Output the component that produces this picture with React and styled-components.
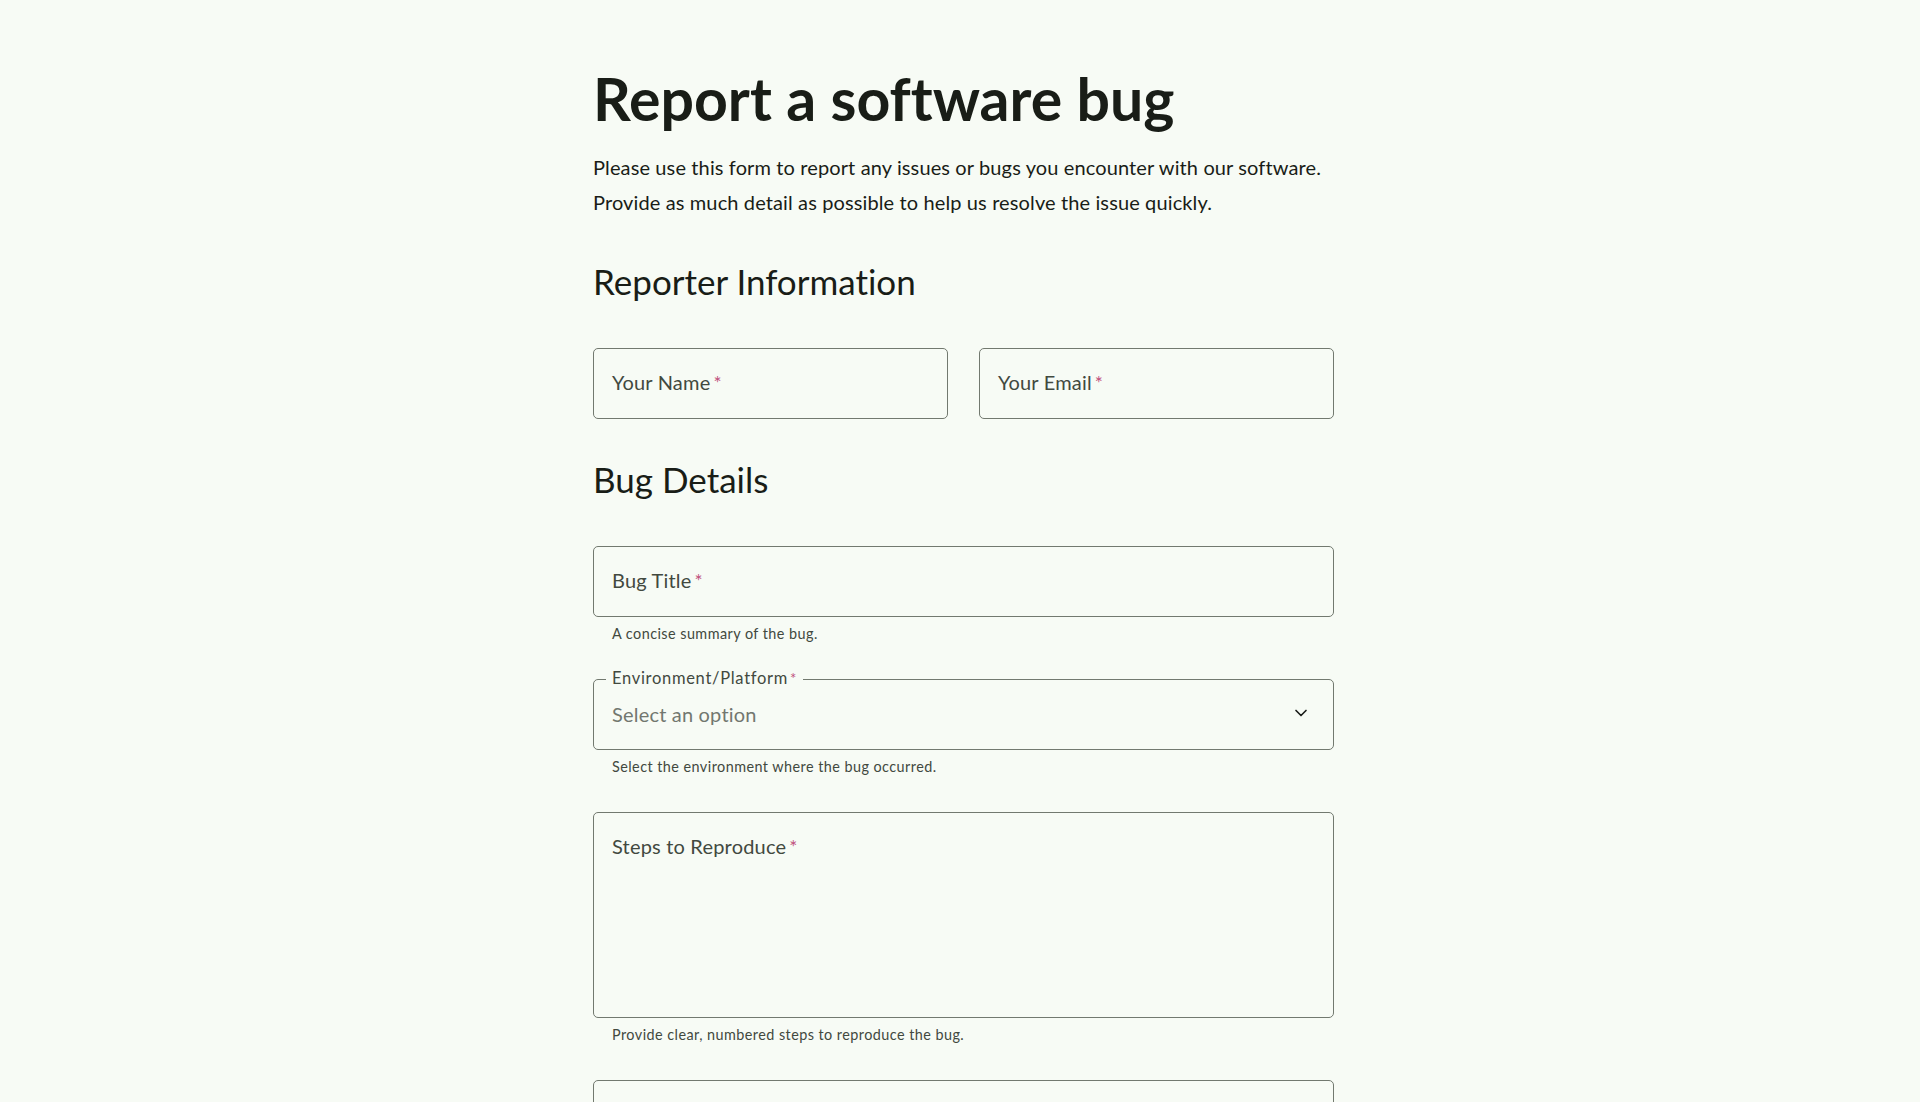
import React from "react";
import styled, { createGlobalStyle } from "styled-components";
import { ChevronDown } from "lucide-react";

const Global = createGlobalStyle`
  html, body { margin: 0; padding: 0; background: #f7fbf5; }
  body {
    font-family: Lato, "Noto Sans", sans-serif;
    color: #191c18;
    font-variant-ligatures: none;
    font-feature-settings: "liga" 0;
  }
  * { box-sizing: border-box; }
`;

const Page = styled.div`
  display: flex;
  justify-content: center;
  padding: 64px 0 80px 7px;
`;

const Main = styled.main`
  width: 741px;
  display: flex;
  flex-direction: column;
`;

const Title = styled.h1`
  margin: 0;
  font-size: 59px;
  line-height: 1.2;
  font-weight: 700;
  color: #191d17;
`;

const Intro = styled.p`
  margin: 15px 0 0;
  font-size: 20px;
  line-height: 35px;
  letter-spacing: 0.12px;
  color: #191d17;
`;

const SectionTitle = styled.h2`
  margin: ${(p) => p.$top}px 0 46px;
  font-size: 35px;
  line-height: 1.2;
  font-weight: 400;
  color: #191d17;
`;

const Row = styled.div`
  display: grid;
  grid-template-columns: 1fr 1fr;
  gap: 31px;
`;

const Field = styled.div`
  display: flex;
  flex-direction: column;
  margin-bottom: ${(p) => p.$gap ?? 35}px;
`;

const Box = styled.div`
  position: relative;
  height: ${(p) => p.$h || 71}px;
  border: 1px solid #72796f;
  border-radius: 5px;
  display: flex;
  align-items: ${(p) => (p.$multi ? "flex-start" : "center")};
  justify-content: space-between;
  padding: ${(p) => (p.$multi ? "21px 18px 0 18px" : "0 22px 2px 18px")};
`;

const Label = styled.span`
  font-size: 20px;
  line-height: 24px;
  letter-spacing: 0.19px;
  color: #42493f;
`;

const Req = styled.span`
  color: #c0507c;
  font-size: 19px;
  margin-left: 3px;
`;

const Placeholder = styled.span`
  font-size: 20px;
  line-height: 24px;
  letter-spacing: 0.19px;
  color: #72776f;
  margin-top: 2px;
`;

const FloatLabel = styled.span`
  position: absolute;
  left: 12px;
  top: 0;
  transform: translateY(-60%);
  padding: 0 6px;
  background: #f7fbf5;
  font-size: 16.5px;
  line-height: 20px;
  letter-spacing: 0.7px;
  color: #42493f;
`;

const FloatReq = styled(Req)`
  font-size: 15px;
  margin-left: 2px;
`;

const Helper = styled.div`
  margin-top: 7px;
  padding-left: 19px;
  font-size: 14.4px;
  line-height: 20px;
  letter-spacing: 0.45px;
  color: #42493f;
`;

const Chevron = styled(ChevronDown)`
  color: #191c18;
  flex: none;
`;

function TextField({ label, helper, h, multi, gap }) {
  return (
    <Field $gap={gap}>
      <Box $h={h} $multi={multi}>
        <Label>
          {label}
          <Req>*</Req>
        </Label>
      </Box>
      {helper && <Helper>{helper}</Helper>}
    </Field>
  );
}

export default function App() {
  return (
    <>
      <Global />
      <Page>
        <Main>
          <Title>Report a software bug</Title>
          <Intro>
            Please use this form to report any issues or bugs you encounter with our software.
            <br />
            Provide as much detail as possible to help us resolve the issue quickly.
          </Intro>

          <SectionTitle $top={40}>Reporter Information</SectionTitle>
          <Row>
            <TextField label="Your Name" gap={0} />
            <TextField label="Your Email" gap={0} />
          </Row>

          <SectionTitle $top={39}>Bug Details</SectionTitle>
          <TextField label="Bug Title" helper="A concise summary of the bug." />

          <Field>
            <Box $h={71}>
              <FloatLabel>
                Environment/Platform
                <FloatReq>*</FloatReq>
              </FloatLabel>
              <Placeholder>Select an option</Placeholder>
              <Chevron size={20} strokeWidth={2} />
            </Box>
            <Helper>Select the environment where the bug occurred.</Helper>
          </Field>

          <TextField
            label="Steps to Reproduce"
            helper="Provide clear, numbered steps to reproduce the bug."
            h={206}
            multi
          />
          <TextField
            label="Expected Behavior"
            helper="Describe what you expected to happen."
            h={206}
            multi
          />
          <TextField
            label="Actual Behavior"
            helper="Describe what actually happened."
            h={206}
            multi
          />
        </Main>
      </Page>
    </>
  );
}
